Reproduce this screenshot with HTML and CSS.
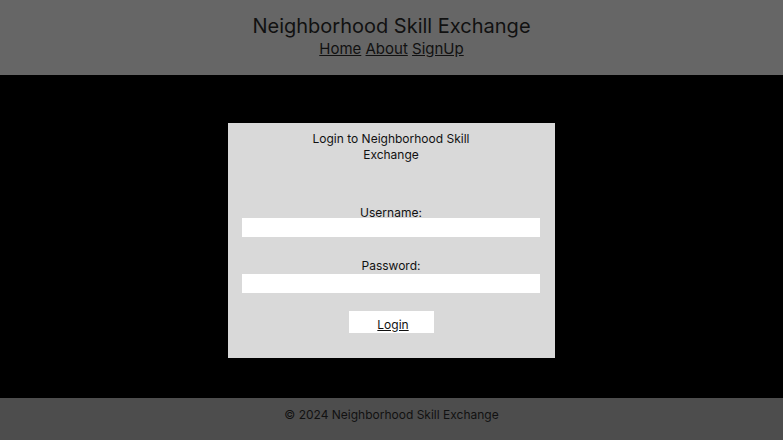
FILE: index.html
```html
<!DOCTYPE html>
<html lang="en">
<head>
<meta charset="utf-8">
<title>Neighborhood Skill Exchange</title>
<link rel="stylesheet" href="styles.css">
</head>
<body>
<header class="site-header">
  <h1 class="site-title">Neighborhood Skill Exchange</h1>
  <nav class="site-nav"><a href="#">Home</a> <a href="#">About</a> <a href="#">SignUp</a></nav>
</header>
<main class="site-main">
  <section class="card">
    <h2 class="card-title">Login to Neighborhood Skill Exchange</h2>
    <form class="login-form">
      <label class="field-label field-label-user" for="username">Username:</label>
      <input class="field-input" id="username" type="text">
      <label class="field-label field-label-pass" for="password">Password:</label>
      <input class="field-input" id="password" type="password">
      <button class="login-btn" type="button"><span class="login-text">Login</span></button>
    </form>
  </section>
</main>
<footer class="site-footer">© 2024 Neighborhood Skill Exchange</footer>
</body>
</html>
```
FILE: styles.css
```css
* { box-sizing: border-box; }
html, body { margin: 0; padding: 0; }
body {
  font-family: Inter, "Noto Sans", sans-serif;
  color: #111;
  background: #000;
  height: 440px;
  display: flex;
  flex-direction: column;
}
.site-header {
  background: #666666;
  height: 75px;
  padding-top: 14px;
  text-align: center;
}
.site-title {
  margin: 0;
  font-size: 20px;
  font-weight: 400;
  line-height: 24px;
}
.site-nav {
  font-size: 15px;
  line-height: 22px;
}
.site-nav a { color: #111; text-decoration: underline; }
.site-main {
  flex: 1;
  background: #000;
  display: flex;
  justify-content: center;
  align-items: flex-start;
  padding-top: 48px;
}
.card {
  width: 327px;
  height: 235px;
  background: #d9d9d9;
  padding: 8px 15px 0 14px;
}
.card-title {
  margin: 0 auto;
  max-width: 170px;
  text-align: center;
  font-size: 12px;
  font-weight: 400;
  line-height: 16px;
}
.login-form {
  display: flex;
  flex-direction: column;
  align-items: center;
  margin-top: 43px;
}
.field-label {
  display: block;
  font-size: 12px;
  line-height: 13px;
}
.field-label-user { margin-bottom: -1px; }
.field-label-pass { margin-top: 22px; margin-bottom: 2px; }
.field-input {
  width: 298px;
  height: 19px;
  border: none;
  background: #fff;
  padding: 0;
  margin: 0;
}
.login-btn {
  margin-top: 18px;
  width: 85px;
  height: 22px;
  border: none;
  background: #fff;
  font-family: Inter, "Noto Sans", sans-serif;
  font-size: 12px;
  color: #111;
  padding: 4px 0 0 4px;
}
.login-text { text-decoration: underline; }
.site-footer {
  background: #4d4d4d;
  height: 42px;
  text-align: center;
  font-size: 12px;
  line-height: 16px;
  padding-top: 9px;
}
```
